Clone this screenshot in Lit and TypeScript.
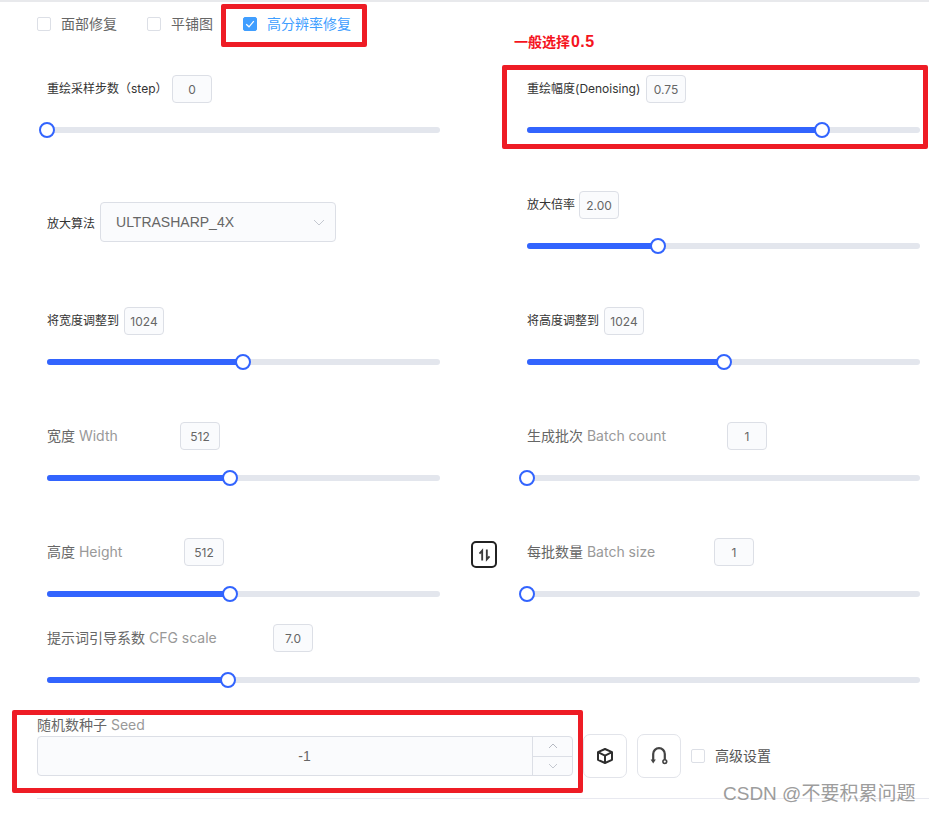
import { LitElement, html, css, nothing } from "lit";
import { customElement } from "lit/decorators.js";

interface Slider {
  zh: string;
  en?: string;
  val: string;
  gap: number;
  thumb: number;
  big?: boolean;
}

const L = 47;
const R = 527;

@customElement("app-root")
export class AppRoot extends LitElement {
  static styles = css`
    :host {
      display: block;
      position: relative;
      width: 929px;
      height: 813px;
      overflow: hidden;
      background: #fff;
      font-family: "Inter", "Noto Sans CJK SC", sans-serif;
      color: #333;
      font-size: 12px;
    }
    .topline { height: 2px; background: #e8e9ec; }
    .checks { display: flex; align-items: center; height: 44px; padding-left: 37px; }
    .check { display: flex; align-items: center; gap: 10px; font-size: 14px; color: #666; }
    .check.on { color: #409eff; margin-left: 30px; }
    .check.second { margin-left: 30px; }
    .check-text { padding-bottom: 2px; }
    .box { width: 12px; height: 12px; border: 1px solid #dcdfe6; border-radius: 2px; background: #fff; display: flex; align-items: center; justify-content: center; flex: none; }
    .box.on { background: #409eff; border-color: #409eff; }
    .grid {
      display: grid;
      margin-top: 29px;
      padding-left: 47px;
      grid-template-columns: 393px 87px 393px;
      grid-template-rows: 116px 116px 115px 116px 86px 92px;
    }
    .label-row { display: flex; align-items: center; height: 28px; }
    .name { white-space: nowrap; flex: none; padding-bottom: 4px; }
    .name.big { font-size: 14px; color: #666; padding-bottom: 2px; }
    .en { color: #999; }
    .num { flex: none; width: 38px; height: 26px; border: 1px solid #dcdfe6; border-radius: 4px; background: #fafbfd; color: #666; display: flex; align-items: center; justify-content: center; }
    .track { position: relative; height: 6px; margin-top: 24px; border-radius: 3px; background: #e3e6ed; }
    .track.big { margin-top: 25px; }
    .fill { height: 6px; border-radius: 3px; background: #3264fe; }
    .thumb { position: absolute; top: -5px; width: 12px; height: 12px; margin-left: -8px; border: 2px solid #3264fe; border-radius: 50%; background: #fff; }
    .select-cell { display: flex; align-items: flex-start; padding-top: 11px; }
    .select-label { height: 40px; display: flex; align-items: center; margin-right: 5px; }
    .select { height: 38px; border: 1px solid #dcdfe6; border-radius: 4px; background: #fafbfd; display: flex; align-items: center; justify-content: space-between; padding: 0 10px 0 15px; width: 209px; font-family: "Liberation Sans", sans-serif; font-size: 14px; color: #666; }
    .swap-cell { padding-top: 3px; display: flex; justify-content: flex-start; }
    .swap { margin-left: 31px; width: 22px; height: 23px; border: 2px solid #222; border-radius: 5px; display: flex; align-items: center; justify-content: center; }
    .wide { grid-column: 1 / -1; }
    .seed-wrap { padding-left: 37px; }
    .seed-label { height: 18px; line-height: 18px; font-size: 14px; color: #666; }
    .controls { display: flex; align-items: center; height: 44px; }
    .seed-input { display: flex; width: 534px; height: 38px; border: 1px solid #dcdfe6; border-radius: 4px; background: #fafbfd; font-family: "Liberation Sans", sans-serif; font-size: 14px; color: #666; }
    .seed-value { flex: 1; display: flex; align-items: center; justify-content: center; padding-left: 39px; }
    .steppers { width: 39px; border-left: 1px solid #dcdfe6; display: flex; flex-direction: column; }
    .steppers div { flex: 1; display: flex; align-items: center; justify-content: center; }
    .steppers div + div { border-top: 1px solid #dcdfe6; }
    .icon-btn { width: 42px; height: 42px; border: 1px solid #e2e4ea; border-radius: 7px; background: #fff; display: flex; align-items: center; justify-content: center; margin-left: 10px; flex: none; }
    .adv { display: flex; align-items: center; gap: 10px; margin-left: 10px; font-size: 14px; color: #555; }
    .divider { height: 1px; margin: 20px 0 0 37px; background: #e8e9f0; }
    .mark { position: absolute; left: 723px; top: 781px; font-family: "Liberation Sans", "Noto Sans CJK SC", sans-serif; font-size: 19px; line-height: 26px; color: #8c8c8c; white-space: nowrap; opacity: .85; }
    .note { position: absolute; left: 514px; top: 33px; font-family: "Liberation Sans", "Noto Sans CJK SC", sans-serif; font-size: 14px; line-height: 18px; font-weight: 700; color: #f5141e; white-space: nowrap; }
    .note span { font-size: 16px; margin-left: 1px; letter-spacing: .4px; }
    .red { position: absolute; box-sizing: border-box; border: 5px solid #ee1c25; border-radius: 2px; pointer-events: none; }
    .r1 { left: 221px; top: 4px; width: 146px; height: 43px; }
    .r2 { left: 502px; top: 65px; width: 426px; height: 84px; }
    .r3 { left: 12px; top: 710px; width: 571px; height: 83px; }
  `;

  private slider(s: Slider, x0: number, w: number) {
    const pos = s.thumb - x0;
    return html`<div>
      <div class="label-row">
        <span class="name ${s.big ? "big" : ""}" style="width:${s.gap}px">${s.zh}${s.en
          ? html`<span class=${s.big ? "en" : ""}>${s.en}</span>`
          : nothing}</span>
        <span class="num">${s.val}</span>
      </div>
      <div class="track ${s.big ? "big" : ""}" style="width:${w}px">
        <div class="fill" style="width:${pos}px"></div>
        <div class="thumb" style="left:${pos}px"></div>
      </div>
    </div>`;
  }

  private tick() {
    return html`<svg width="10" height="8" viewBox="0 0 10 8" fill="none" stroke="#fff" stroke-width="1.2"><path d="M1.2 4.2 4 6.8 8.8 1.2"/></svg>`;
  }

  render() {
    return html`
      <div class="topline"></div>
      <div class="checks">
        <label class="check"><span class="box"></span><span class="check-text">面部修复</span></label>
        <label class="check second"><span class="box"></span><span class="check-text">平铺图</span></label>
        <label class="check on"><span class="box on">${this.tick()}</span><span class="check-text">高分辨率修复</span></label>
      </div>
      <div class="grid">
        ${this.slider({ zh: "重绘采样步数（step）", val: "0", gap: 125, thumb: 47 }, L, 393)}
        <div></div>
        ${this.slider({ zh: "重绘幅度(Denoising)", val: "0.75", gap: 119, thumb: 822 }, R, 393)}

        <div class="select-cell">
          <span class="select-label">放大算法</span>
          <div class="select">
            <span>ULTRASHARP_4X</span>
            <svg width="12" height="7" viewBox="0 0 12 7" fill="none" stroke="#c4c8d0" stroke-width="1"><path d="M1 1l5 5 5-5"/></svg>
          </div>
        </div>
        <div></div>
        ${this.slider({ zh: "放大倍率", val: "2.00", gap: 52, thumb: 658 }, R, 393)}

        ${this.slider({ zh: "将宽度调整到", val: "1024", gap: 77, thumb: 243 }, L, 393)}
        <div></div>
        ${this.slider({ zh: "将高度调整到", val: "1024", gap: 77, thumb: 724 }, R, 393)}

        ${this.slider({ zh: "宽度 ", en: "Width", val: "512", gap: 133, thumb: 230, big: true }, L, 393)}
        <div></div>
        ${this.slider({ zh: "生成批次 ", en: "Batch count", val: "1", gap: 200, thumb: 527, big: true }, R, 393)}

        ${this.slider({ zh: "高度 ", en: "Height", val: "512", gap: 137, thumb: 230, big: true }, L, 393)}
        <div class="swap-cell">
          <div class="swap">
            <svg width="13" height="14" viewBox="0 0 14 14" fill="none" stroke="#3a3a3a" stroke-width="2"><path d="M4.5 13V2.2L1.6 5.4M9.5 1v10.8l2.9-3.2"/></svg>
          </div>
        </div>
        ${this.slider({ zh: "每批数量 ", en: "Batch size", val: "1", gap: 187, thumb: 527, big: true }, R, 393)}

        <div class="wide">
          ${this.slider({ zh: "提示词引导系数 ", en: "CFG scale", val: "7.0", gap: 226, thumb: 228, big: true }, L, 873)}
        </div>
      </div>
      <div class="seed-wrap">
        <div class="seed-label">随机数种子 <span class="en">Seed</span></div>
        <div class="controls">
          <div class="seed-input">
            <div class="seed-value">-1</div>
            <div class="steppers">
              <div><svg width="10" height="6" viewBox="0 0 10 6" fill="none" stroke="#b5b9c2"><path d="M1 5l4-4 4 4"/></svg></div>
              <div><svg width="10" height="6" viewBox="0 0 10 6" fill="none" stroke="#c4c8d0"><path d="M1 1l4 4 4-4"/></svg></div>
            </div>
          </div>
          <div class="icon-btn">
            <svg width="18" height="18" viewBox="0 0 18 18" fill="none" stroke="#2e2e2e" stroke-width="2" stroke-linejoin="round"><path d="M9 2 16 5.2v7.6L9 16 2 12.8V5.2z"/><path d="M2 5.2 9 8.6l7-3.4M9 8.6V16"/></svg>
          </div>
          <div class="icon-btn">
            <svg width="18" height="18" viewBox="0 0 18 18" fill="none" stroke="#444" stroke-width="2.2"><path d="M3.2 13V7a5.8 5.8 0 0 1 11.6 0v6"/><path d="M0.6 12.4H5.8L3.2 16.5z" fill="#444" stroke="none"/><circle cx="14.8" cy="14.6" r="1.9" stroke-width="1.6"/></svg>
          </div>
          <label class="adv"><span class="box"></span><span class="check-text">高级设置</span></label>
        </div>
      </div>
      <div class="divider"></div>
      <div class="mark">CSDN @不要积累问题</div>
      <div class="note">一般选择<span>0.5</span></div>
      <div class="red r1"></div>
      <div class="red r2"></div>
      <div class="red r3"></div>
    `;
  }
}
